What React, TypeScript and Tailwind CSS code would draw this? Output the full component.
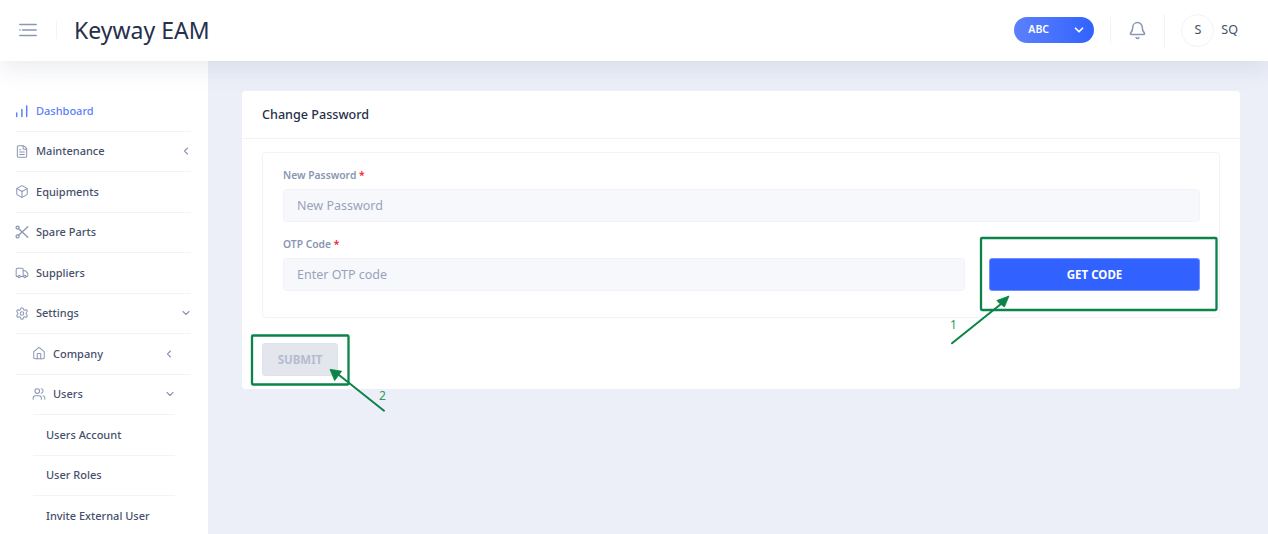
import React from "react";
import { ChevronDown, ChevronLeft, Bell, FileText, Box, Truck, Settings, House, Users } from "lucide-react";

const font = { fontFamily: '"Noto Sans", "Open Sans", sans-serif' };

function Row({ icon, label, chevron, active, border = true, indent = "" }: { icon?: React.ReactNode; label: string; chevron?: "left" | "down"; active?: boolean; border?: boolean; indent?: string }) {
  return (
    <div className={`flex h-[40.5px] items-center ${border ? "border-b border-[#f1f3f9]" : ""} ${indent}`}>
      {icon && <span className="-ml-px mr-[7px] flex w-[14px] shrink-0 items-center justify-center text-[#8a96b4]">{icon}</span>}
      <span className={`text-[11px] font-medium ${active ? "text-[#5c80fb]" : "text-[#46506b]"}`}>{label}</span>
      {chevron === "left" && <ChevronLeft size={12} strokeWidth={2.25} className="ml-auto mr-[-1px] text-[#8a96b4]" />}
      {chevron === "down" && <ChevronDown size={12} strokeWidth={2.25} className="ml-auto mr-[-1px] text-[#8a96b4]" />}
    </div>
  );
}

function Sub({ label, border = true }: { label: string; border?: boolean }) {
  return (
    <div className={`flex h-[40.5px] items-center pl-[13px] text-[11px] font-medium text-[#46506b] ${border ? "border-b border-[#f1f3f9]" : ""}`}>{label}</div>
  );
}

function Sidebar() {
  return (
    <aside className="h-full w-[208px] shrink-0 overflow-hidden bg-white pl-[16px] pr-[17px] pt-[30px]">
      <Row active label="Dashboard" icon={
        <svg width="14" height="14" viewBox="0 0 14 14" fill="none" stroke="#5c80fb" strokeWidth="1.5" strokeLinecap="round"><path d="M1.7 9v3.6M6.9 5.5v7.1M11.7 2v10.6" /></svg>
      } />
      <Row label="Maintenance" chevron="left" icon={<FileText size={17} strokeWidth={1.75} />} />
      <Row label="Equipments" icon={<Box size={17} strokeWidth={1.75} />} />
      <Row label="Spare Parts" icon={
        <svg width="14" height="14" viewBox="0 0 14 14" fill="none" stroke="#8a96b4" strokeWidth="1.3" strokeLinecap="round"><circle cx="2.6" cy="2.6" r="1.5" /><circle cx="2.6" cy="11.4" r="1.5" /><path d="M3.7 3.7 12.8 12.3M3.7 10.3 12.8 1.7" /></svg>
      } />
      <Row label="Suppliers" icon={<Truck size={16} strokeWidth={1.75} />} />
      <Row label="Settings" chevron="down" icon={<Settings size={17} strokeWidth={1.75} />} />
      <Row label="Company" chevron="left" indent="pl-[17px] pr-[17px]" icon={<House size={17} strokeWidth={1.75} />} />
      <div className="ml-[17px] mr-[16px]">
        <Row label="Users" chevron="down" icon={<Users size={16} strokeWidth={1.75} />} />
        <Sub label="Users Account" />
        <Sub label="User Roles" />
        <Sub label="Invite External User" border={false} />
      </div>
    </aside>
  );
}

function Header() {
  return (
    <header className="relative z-10 flex h-[61px] shrink-0 items-center bg-white pb-px pl-[19px] pr-[30px] shadow-[0_8px_24px_rgba(60,70,110,0.1)]">
      <svg width="18" height="14" viewBox="0 0 18 14" fill="none" stroke="#8a96b4" strokeWidth="1.5" strokeLinecap="round"><path d="M.8 1.5h16.4M.8 7h.2M3.5 7h13.7M.8 12.5h16.4" /></svg>
      <div className="ml-[19px] h-[18px] w-px bg-[#f1f3f9]" />
      <div className="ml-[17px] text-[23px] leading-none text-[#27304a]">Keyway EAM</div>
      <div className="ml-auto flex h-[26px] w-[80px] items-center justify-between rounded-full bg-gradient-to-r from-[#5c80fb] to-[#3162ff] pl-[14px] pr-[8px] text-[10.5px] font-semibold text-white">
        ABC
        <ChevronDown size={14} strokeWidth={3} />
      </div>
      <div className="ml-[16px] h-[26px] w-px bg-[#f1f3f9]" />
      <Bell size={19} strokeWidth={1.9} className="ml-[17px] text-[#8a96b4]" />
      <div className="ml-[17px] h-[33px] w-px bg-[#f1f3f9]" />
      <div className="ml-[16px] flex h-[33px] w-[33px] items-center justify-center rounded-full border border-[#f1f3f9] text-[12.5px] text-[#46506b]">S</div>
      <div className="ml-[7px] text-[12.5px] text-[#46506b]">SQ</div>
    </header>
  );
}

function Field({ label, placeholder }: { label: string; placeholder: string }) {
  return (
    <div>
      <div className="h-[21px] text-[10.3px] font-semibold leading-[14px] text-[#8a96b4]">{label} <span className="text-[#f5222d]">*</span></div>
      <div className="flex h-[33px] items-center rounded-[4px] border border-[#f1f3f9] bg-[#f7f8fc] pl-[13px] pt-[2px] text-[12.5px] text-[#97a3ba]">{placeholder}</div>
    </div>
  );
}

function Annotations() {
  const g = "#0a8448";
  return (
    <svg className="pointer-events-none absolute left-0 top-0" width="1268" height="534" fill="none">
      <rect x="981" y="238" width="235.5" height="72" rx="1" stroke={g} strokeWidth="2.3" />
      <rect x="252" y="335.5" width="96.5" height="49" rx="1" stroke={g} strokeWidth="2.3" />
      <path d="M952 343.3 L1001 304" stroke={g} strokeWidth="2" strokeLinecap="round" />
      <path d="M1009 296 L996.8 300.5 L999.5 303.3 L1004.4 307 Z" fill={g} stroke={g} strokeWidth=".8" />
      <path d="M384 410.7 L339 375" stroke={g} strokeWidth="2" strokeLinecap="round" />
      <path d="M330 369.3 L341.6 371.2 L338.5 375.5 L334.6 380.6 Z" fill={g} stroke={g} strokeWidth=".8" />
    </svg>
  );
}

export default function App() {
  return (
    <div style={font} className="relative flex h-[534px] w-[1268px] flex-col overflow-hidden bg-[#eceff8]">
      <Header />
      <div className="flex min-h-0 flex-1">
        <Sidebar />
        <main className="flex-1 pl-[34px] pr-[28px] pt-[30px]">
          <div className="rounded-[4px] bg-white">
            <div className="flex h-[48px] items-center border-b border-[#f1f3f9] pl-[20px] pt-[2px] text-[12.6px] font-medium text-[#27304a]">Change Password</div>
            <div className="p-[13px_20px_13px]">
              <div className="flex flex-col gap-[15px] rounded-[4px] border border-[#f1f3f9] p-[14.5px_19px_26px_20px]">
                <Field label="New Password" placeholder="New Password" />
                <div className="flex items-end gap-[24px]">
                  <div className="flex-1"><Field label="OTP Code" placeholder="Enter OTP code" /></div>
                  <div className="flex h-[33px] w-[211px] items-center justify-center rounded-[3px] border border-[#6f8ffb] bg-[#3162ff] pt-px text-[11.5px] font-bold text-white">GET CODE</div>
                </div>
              </div>
              <div className="mt-[25.5px] flex h-[33px] w-[76px] items-center justify-center rounded-[3px] border border-[#dfe2ea] bg-[#e4e6ed] text-[11.5px] font-bold text-[#b4bccd]">SUBMIT</div>
            </div>
          </div>
        </main>
      </div>
      <Annotations />
      <div className="absolute left-[950px] top-[318px] text-[12px] leading-[14px] text-[#2e9a62]">1</div>
      <div className="absolute left-[379px] top-[389px] text-[12px] leading-[14px] text-[#2e9a62]">2</div>
    </div>
  );
}
